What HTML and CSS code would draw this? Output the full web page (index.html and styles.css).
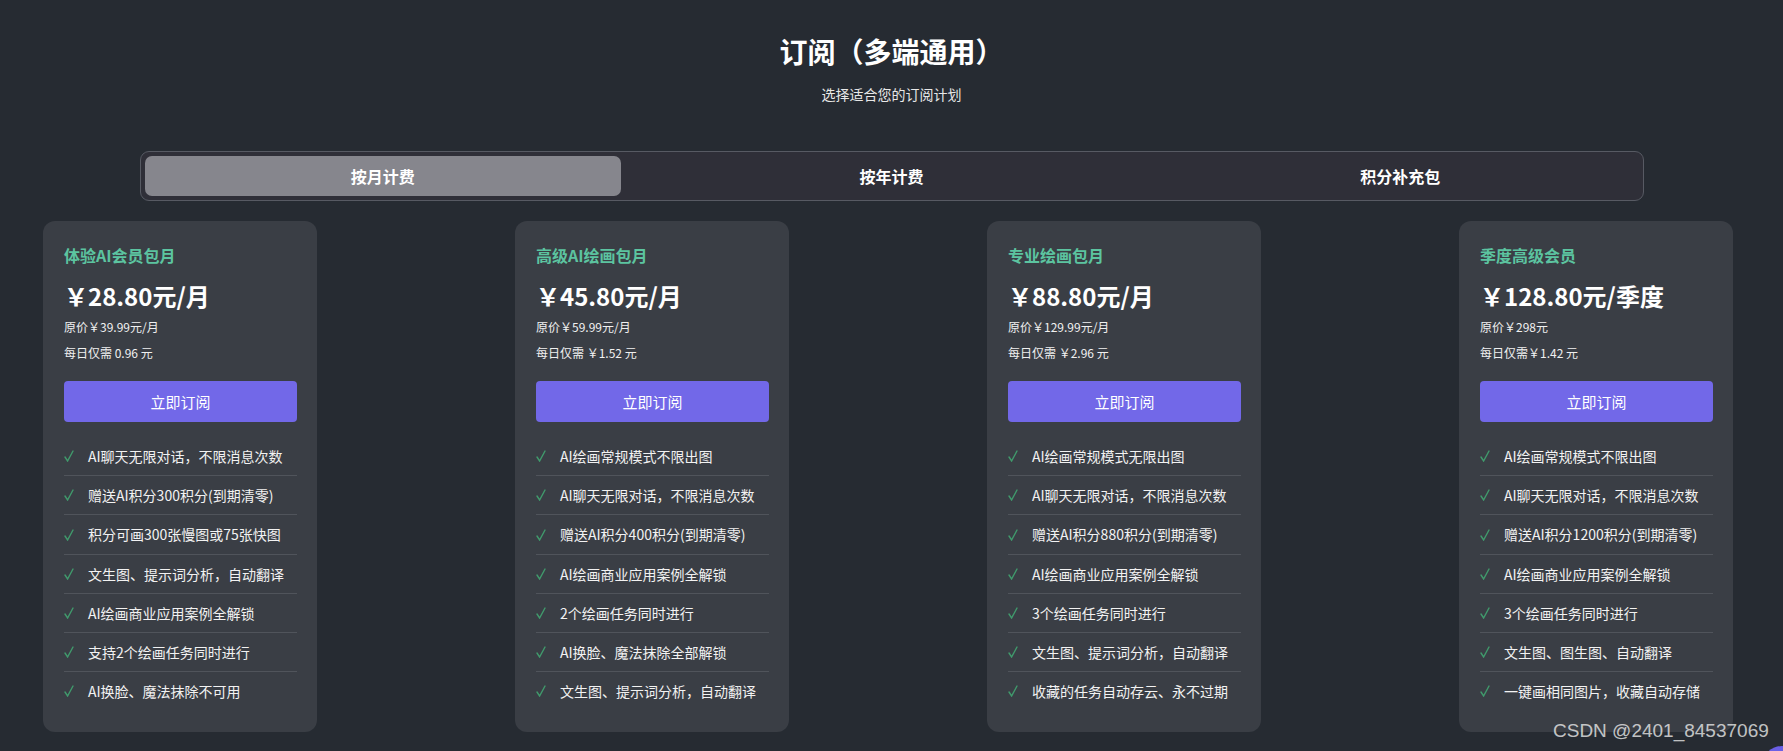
FILE: index.html
```html
<html lang="zh-CN">
<head>
    <meta charset="UTF-8">
    <meta name="viewport" content="width=device-width, initial-scale=1.0">
    <title>订阅（多端通用）</title>
    <link rel="stylesheet" href="styles.css">
</head>
<body>
    <div class="page">
        <div class="header">
            <div class="title">订阅（多端通用）</div>
            <div class="subtitle">选择适合您的订阅计划</div>
        </div>

        <div class="tabs">
            <div class="tab active">按月计费</div>
            <div class="tab">按年计费</div>
            <div class="tab">积分补充包</div>
        </div>

        <div class="plans">
            <div class="plan">
                <div class="plan-name">体验AI会员包月</div>
                <div class="plan-price">￥28.80元/月</div>
                <div class="plan-note">原价￥39.99元/月</div>
                <div class="plan-note daily">每日仅需 0.96 元</div>
                <button class="subscribe">立即订阅</button>
                <ul class="features">
                    <li><span class="check"><svg viewBox="0 0 10 12"><polyline points="1,7 3.6,11 9,1"/></svg></span>AI聊天无限对话，不限消息次数</li>
                    <li><span class="check"><svg viewBox="0 0 10 12"><polyline points="1,7 3.6,11 9,1"/></svg></span>赠送AI积分300积分(到期清零)</li>
                    <li><span class="check"><svg viewBox="0 0 10 12"><polyline points="1,7 3.6,11 9,1"/></svg></span>积分可画300张慢图或75张快图</li>
                    <li><span class="check"><svg viewBox="0 0 10 12"><polyline points="1,7 3.6,11 9,1"/></svg></span>文生图、提示词分析，自动翻译</li>
                    <li><span class="check"><svg viewBox="0 0 10 12"><polyline points="1,7 3.6,11 9,1"/></svg></span>AI绘画商业应用案例全解锁</li>
                    <li><span class="check"><svg viewBox="0 0 10 12"><polyline points="1,7 3.6,11 9,1"/></svg></span>支持2个绘画任务同时进行</li>
                    <li><span class="check"><svg viewBox="0 0 10 12"><polyline points="1,7 3.6,11 9,1"/></svg></span>AI换脸、魔法抹除不可用</li>
                </ul>
            </div>

            <div class="plan">
                <div class="plan-name">高级AI绘画包月</div>
                <div class="plan-price">￥45.80元/月</div>
                <div class="plan-note">原价￥59.99元/月</div>
                <div class="plan-note daily">每日仅需 ￥1.52 元</div>
                <button class="subscribe">立即订阅</button>
                <ul class="features">
                    <li><span class="check"><svg viewBox="0 0 10 12"><polyline points="1,7 3.6,11 9,1"/></svg></span>AI绘画常规模式不限出图</li>
                    <li><span class="check"><svg viewBox="0 0 10 12"><polyline points="1,7 3.6,11 9,1"/></svg></span>AI聊天无限对话，不限消息次数</li>
                    <li><span class="check"><svg viewBox="0 0 10 12"><polyline points="1,7 3.6,11 9,1"/></svg></span>赠送AI积分400积分(到期清零)</li>
                    <li><span class="check"><svg viewBox="0 0 10 12"><polyline points="1,7 3.6,11 9,1"/></svg></span>AI绘画商业应用案例全解锁</li>
                    <li><span class="check"><svg viewBox="0 0 10 12"><polyline points="1,7 3.6,11 9,1"/></svg></span>2个绘画任务同时进行</li>
                    <li><span class="check"><svg viewBox="0 0 10 12"><polyline points="1,7 3.6,11 9,1"/></svg></span>AI换脸、魔法抹除全部解锁</li>
                    <li><span class="check"><svg viewBox="0 0 10 12"><polyline points="1,7 3.6,11 9,1"/></svg></span>文生图、提示词分析，自动翻译</li>
                </ul>
            </div>

            <div class="plan">
                <div class="plan-name">专业绘画包月</div>
                <div class="plan-price">￥88.80元/月</div>
                <div class="plan-note">原价￥129.99元/月</div>
                <div class="plan-note daily">每日仅需 ￥2.96 元</div>
                <button class="subscribe">立即订阅</button>
                <ul class="features">
                    <li><span class="check"><svg viewBox="0 0 10 12"><polyline points="1,7 3.6,11 9,1"/></svg></span>AI绘画常规模式无限出图</li>
                    <li><span class="check"><svg viewBox="0 0 10 12"><polyline points="1,7 3.6,11 9,1"/></svg></span>AI聊天无限对话，不限消息次数</li>
                    <li><span class="check"><svg viewBox="0 0 10 12"><polyline points="1,7 3.6,11 9,1"/></svg></span>赠送AI积分880积分(到期清零)</li>
                    <li><span class="check"><svg viewBox="0 0 10 12"><polyline points="1,7 3.6,11 9,1"/></svg></span>AI绘画商业应用案例全解锁</li>
                    <li><span class="check"><svg viewBox="0 0 10 12"><polyline points="1,7 3.6,11 9,1"/></svg></span>3个绘画任务同时进行</li>
                    <li><span class="check"><svg viewBox="0 0 10 12"><polyline points="1,7 3.6,11 9,1"/></svg></span>文生图、提示词分析，自动翻译</li>
                    <li><span class="check"><svg viewBox="0 0 10 12"><polyline points="1,7 3.6,11 9,1"/></svg></span>收藏的任务自动存云、永不过期</li>
                </ul>
            </div>

            <div class="plan">
                <div class="plan-name">季度高级会员</div>
                <div class="plan-price">￥128.80元/季度</div>
                <div class="plan-note">原价￥298元</div>
                <div class="plan-note daily">每日仅需￥1.42 元</div>
                <button class="subscribe">立即订阅</button>
                <ul class="features">
                    <li><span class="check"><svg viewBox="0 0 10 12"><polyline points="1,7 3.6,11 9,1"/></svg></span>AI绘画常规模式不限出图</li>
                    <li><span class="check"><svg viewBox="0 0 10 12"><polyline points="1,7 3.6,11 9,1"/></svg></span>AI聊天无限对话，不限消息次数</li>
                    <li><span class="check"><svg viewBox="0 0 10 12"><polyline points="1,7 3.6,11 9,1"/></svg></span>赠送AI积分1200积分(到期清零)</li>
                    <li><span class="check"><svg viewBox="0 0 10 12"><polyline points="1,7 3.6,11 9,1"/></svg></span>AI绘画商业应用案例全解锁</li>
                    <li><span class="check"><svg viewBox="0 0 10 12"><polyline points="1,7 3.6,11 9,1"/></svg></span>3个绘画任务同时进行</li>
                    <li><span class="check"><svg viewBox="0 0 10 12"><polyline points="1,7 3.6,11 9,1"/></svg></span>文生图、图生图、自动翻译</li>
                    <li><span class="check"><svg viewBox="0 0 10 12"><polyline points="1,7 3.6,11 9,1"/></svg></span>一键画相同图片，收藏自动存储</li>
                </ul>
            </div>
        </div>
    </div>

    <div class="watermark">CSDN @2401_84537069</div>
    <div class="float-btn"></div>
</body>
</html>
```

FILE: styles.css
```css
body {
    margin: 0;
    background-color: #262b32;
    color: #f2f2f2;
    font-family: "Microsoft YaHei", "Noto Sans CJK SC", sans-serif;
    overflow: hidden;
}
.page {
    padding-top: 31px;
}
.header {
    text-align: center;
}
.title {
    font-size: 28px;
    font-weight: bold;
    line-height: 40px;
    color: #ffffff;
}
.subtitle {
    margin-top: 13px;
    font-size: 14px;
    line-height: 20px;
    color: #e8e8e8;
}
.tabs {
    width: 1494px;
    margin: 47px auto 0;
    padding: 4px;
    display: flex;
    gap: 32px;
    background-color: #2f2f38;
    border: 1px solid #575a63;
    border-radius: 9px;
}
.tab {
    flex: 1;
    height: 40px;
    display: flex;
    justify-content: center;
    align-items: center;
    font-size: 16px;
    font-weight: bold;
    color: #ffffff;
    border-radius: 7px;
    cursor: pointer;
}
.tab.active {
    background-color: #86868d;
}
.plans {
    margin-top: 20px;
    padding: 0 50px 0 43px;
    display: flex;
    justify-content: space-between;
}
.plan {
    width: 274px;
    box-sizing: border-box;
    padding: 22px 20px 22px 21px;
    background-color: #3a3e45;
    border-radius: 12px;
}
.plan-name {
    font-size: 16px;
    font-weight: bold;
    line-height: 24px;
    color: #5cc4a0;
}
.plan-price {
    margin-top: 12px;
    font-size: 24px;
    font-weight: bold;
    line-height: 34px;
    color: #ffffff;
}
.plan-note {
    margin-top: 4px;
    font-size: 12px;
    line-height: 20px;
    color: #f0f0f0;
}
.plan-note.daily {
    margin-top: 6px;
}
.subscribe {
    display: block;
    width: 100%;
    height: 41px;
    margin-top: 18px;
    font-family: inherit;
    font-size: 15px;
    color: #ffffff;
    background-color: #7268e8;
    border: none;
    border-radius: 4px;
    cursor: pointer;
}
.features {
    list-style: none;
    margin: 15px 0 0;
    padding: 0;
}
.features li {
    display: flex;
    align-items: center;
    padding: 10px 0;
    font-size: 14px;
    line-height: 18.2px;
    color: #f2f2f2;
    border-bottom: 1px solid #50545b;
}
.features li:last-child {
    border-bottom: none;
}
.check {
    width: 24px;
    display: flex;
    align-items: center;
}
.check svg {
    width: 10px;
    height: 12px;
    fill: none;
    stroke: #409a6c;
    stroke-width: 1.4;
    stroke-linecap: round;
}
.watermark {
    position: absolute;
    left: 1553px;
    top: 719px;
    font-family: "Liberation Sans", sans-serif;
    font-size: 19px;
    line-height: 24px;
    color: rgba(235, 235, 235, 0.8);
}
.float-btn {
    position: absolute;
    left: 1762px;
    top: 746px;
    width: 40px;
    height: 40px;
    border-radius: 50%;
    background-color: #6b5fe6;
}
```
